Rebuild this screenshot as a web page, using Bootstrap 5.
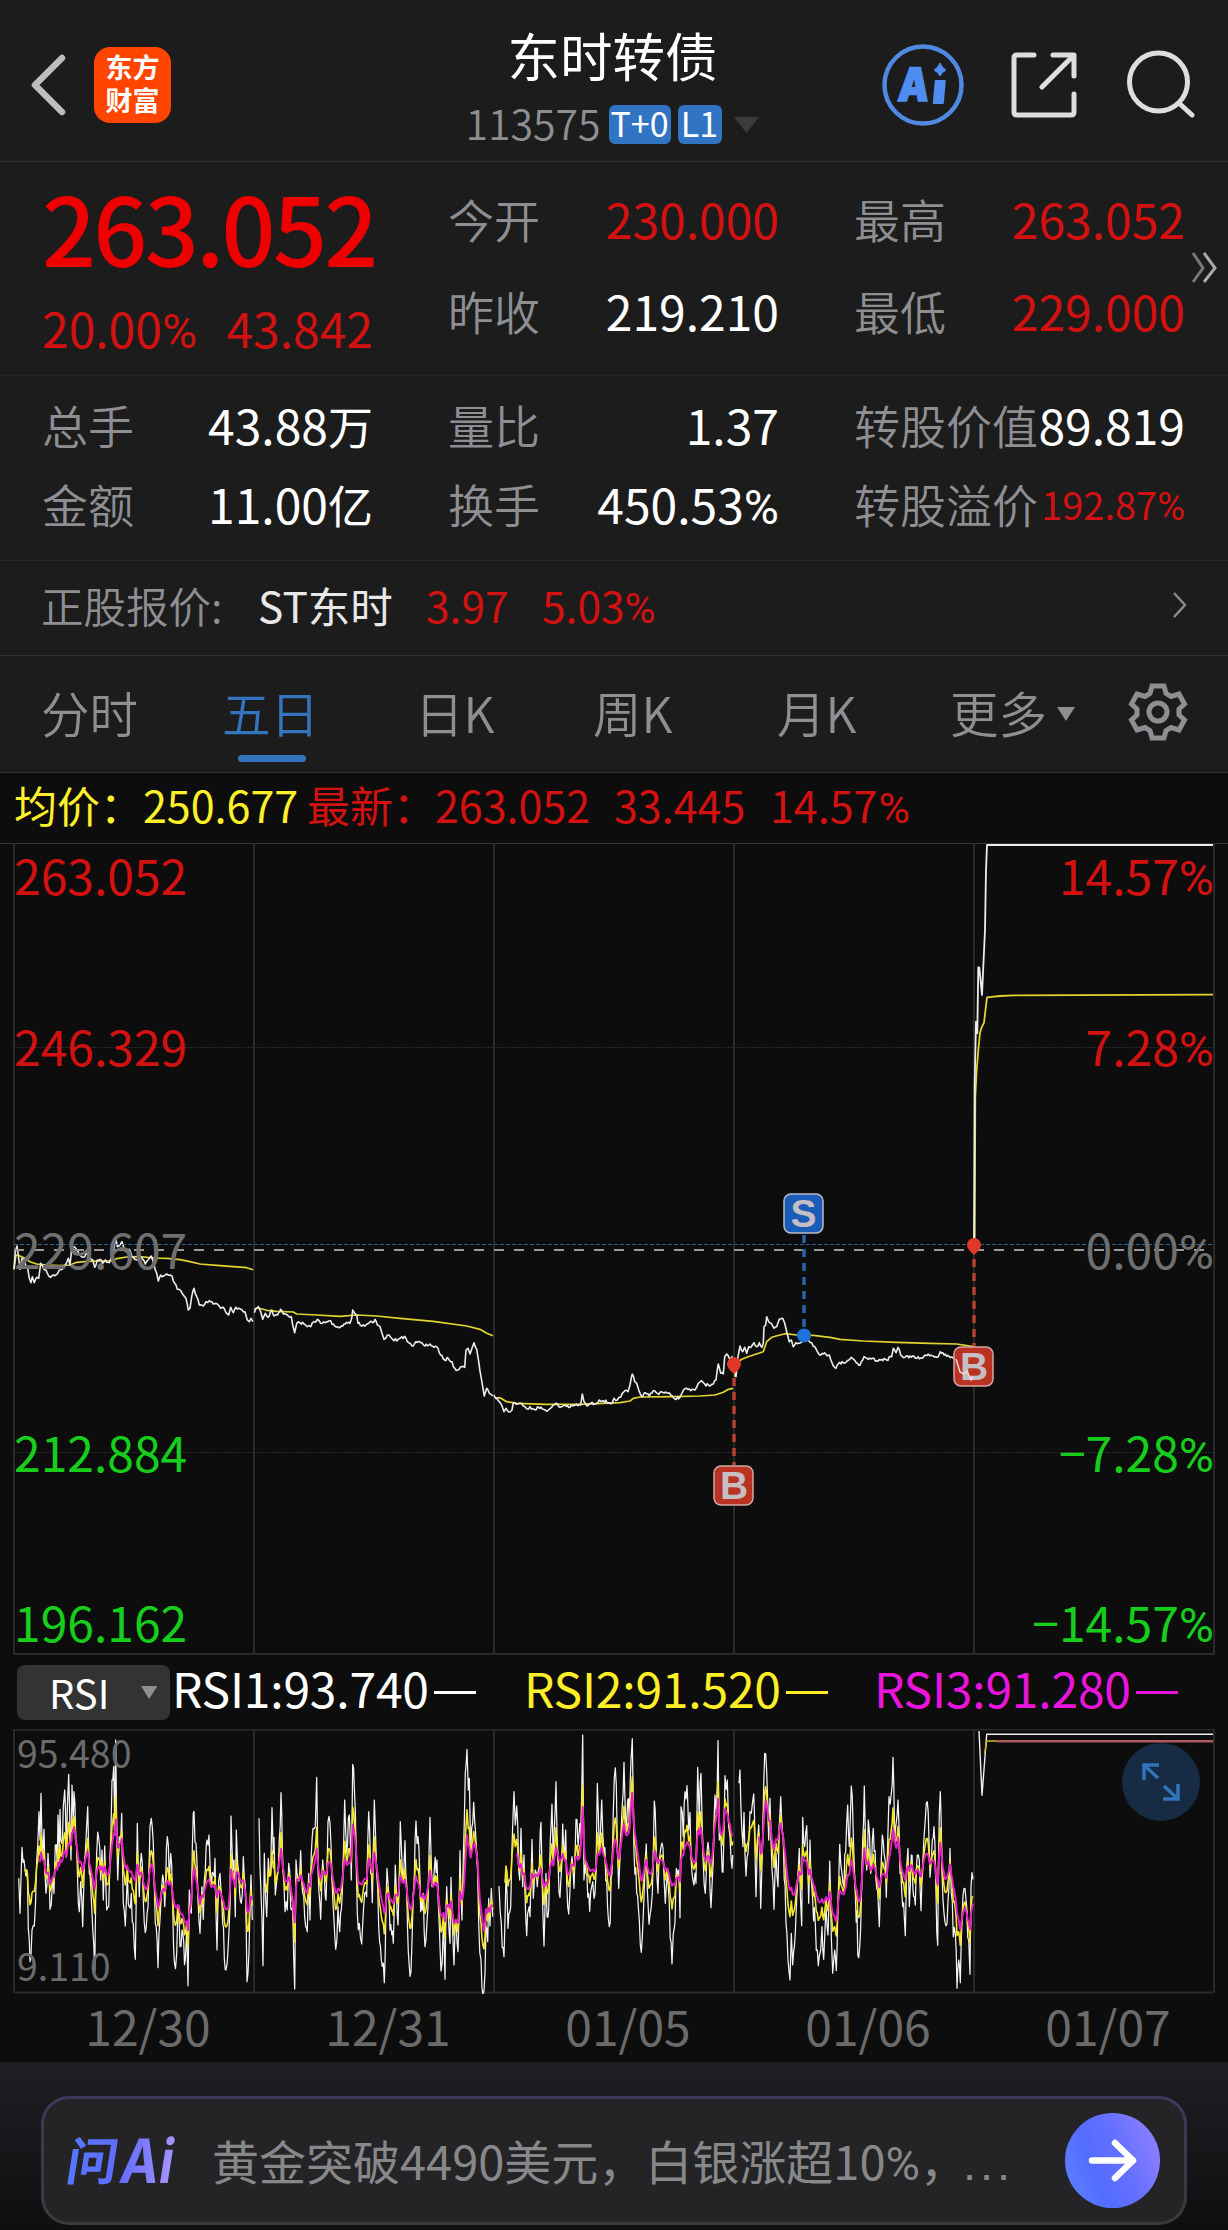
<!DOCTYPE html>
<html lang="zh-CN">
<head>
<meta charset="utf-8">
<meta name="viewport" content="width=device-width, initial-scale=1">
<title>东时转债 113575</title>
<link href="https://cdn.jsdelivr.net/npm/bootstrap@5.3.0/dist/css/bootstrap.min.css" rel="stylesheet">
<style>
:root{--up:#d31110;--muted:#8e8e93;--line:#303032}
body{background:#1c1c1c;color:#fff;font-family:"Noto Sans CJK SC",sans-serif;font-weight:400;width:1228px;height:2230px;overflow:hidden;line-height:1.2}
svg{display:block}
.pc{font-family:Roboto,sans-serif;line-height:0}
.up{color:var(--up)}
.dim{color:var(--muted);font-weight:350}
.topbar{height:162px;border-bottom:1px solid var(--line);display:grid;grid-template-columns:1fr auto 1fr;padding:0 33px 0 30px}
.brand{width:77px;height:76px;border-radius:16px;background:#ff4500;font-size:27px;line-height:33px;font-weight:700;margin-left:27px;padding-top:3px}
.bond-name{font-size:52.5px;line-height:60px;margin-top:24px}
.code-row{margin-top:21px;height:39px}
.bond-code{font-size:41px;line-height:48px;padding-bottom:6px}
.flag{background:#3174c3;border-radius:6px;height:39px;font-size:34px;line-height:35px;text-align:center}
.quote{height:214px;padding:0 42px;border-bottom:1px solid #242425}
.quote,.stats{gap:75px}
.slot{width:331px;flex:none}
.last-price{font-size:95px;line-height:96px;color:#ee0000;font-weight:500;margin-top:16px;letter-spacing:-2.8px}
.pair{font-size:48px;height:92px;display:flex;justify-content:space-between;align-items:center;white-space:nowrap}
.pair .dim{font-size:46px}
.stats{height:185px;padding:9px 42px 0;border-bottom:1px solid #272728}
.stats .pair{height:79px}
.stock{height:95px;padding:0 40px 8px 41px;font-size:42.5px;border-bottom:1px solid var(--line);white-space:nowrap}
.tabs{height:117px;display:grid;grid-template-columns:181px 193px 178px 184px 173px 178px 1fr;padding-left:41px;border-bottom:1px solid var(--line);font-size:48.5px;font-weight:350;color:var(--muted);align-items:center;line-height:60px}
.tabs>div{padding-bottom:4px}
.tabs .on{color:#3575c0;position:relative}
.tabs .on::after{content:"";position:absolute;left:16px;top:73px;width:68px;height:7px;border-radius:4px;background:#3575c0}
.panel{background:#0d0d0d;height:1289px}
.legend-row{height:70px;font-size:43px;line-height:62px;padding-left:14px;white-space:pre}
.legend-row .pc{margin-left:1px}
.rsi-row{height:74px;padding-left:17px;font-size:48px;letter-spacing:-.2px;white-space:nowrap}
.picker{width:153px;height:55px;border-radius:8px;background:#333;font-size:40px;line-height:49px;letter-spacing:0}
.rsi-item{width:350px;color:var(--c)}
.rsi-item span{position:relative;top:-4px}
.rsi-item i{width:42px;height:3px;background:var(--c);margin-left:5px}
.dates{height:68px;padding-left:28px;font-size:48px;line-height:62px;color:#6b6b6b}
.dates div{width:240px;text-align:center}
.ask{height:168px;background:linear-gradient(#1f1e24,#0f0f10);padding:34px 41px 0}
.ask-box{height:129px;border-radius:28px;border:3px solid transparent;background:linear-gradient(#242426,#242426) padding-box,linear-gradient(#3b3a5c,#3a3a3c) border-box;padding:0 24px 0 21px}
.ask-text{font-size:47px;color:#88888a;width:816px;white-space:nowrap;margin-left:33px;line-height:60px;padding-bottom:2px}
.dots{margin-left:-4px;font-family:"Liberation Sans",sans-serif;letter-spacing:4px;line-height:0}
</style>
</head>
<body>
<header class="topbar">
  <div class="d-flex align-items-center pt-2">
    <svg width="37" height="64" viewBox="0 0 37 64" fill="none" stroke="#bdbdbd" stroke-width="6.500" stroke-linecap="round" stroke-linejoin="round"><path d="M32 5L5 32L32 59"/></svg>
    <div class="brand text-center">东方<br>财富</div>
  </div>
  <div class="text-center">
    <div class="bond-name">东时转债</div>
    <div class="code-row d-flex align-items-center justify-content-center">
      <span class="bond-code dim">113575</span>
      <span class="flag" style="width:62px;margin-left:8px">T+0</span>
      <span class="flag" style="width:44px;margin-left:7px">L1</span>
      <svg style="margin-left:8px" width="30" height="20"><path d="M4 2h25L16.500 18z" fill="#3b3b3b"/></svg>
    </div>
  </div>
  <div class="d-flex align-items-center justify-content-end pt-2">
    <svg width="314" height="84" viewBox="881 44 314 84" fill="none">
      <circle cx="923" cy="86" r="38.500" stroke="#5088e2" stroke-width="4.500"/>
      <g fill="#4f8df0" font-family="Inter" font-weight="900" font-size="46" transform="translate(895 102) skewX(-5)"><text x="2" y="0" textLength="31" lengthAdjust="spacingAndGlyphs" stroke="#4f8df0" stroke-width="1.500">A</text><path d="M39-20h9v22h-9z" stroke="#4f8df0" stroke-width="2" stroke-linejoin="round"/></g>
      <path d="M940 64q2 5 6 7q-4 2-6 6q-2-4-6-6q4-2 6-7z" fill="#4f8df0" stroke="#4f8df0"/>
      <g stroke="#dedede" stroke-width="5" stroke-linecap="round" stroke-linejoin="round"><path d="M1034 56H1017Q1014 56 1014 59V113Q1014 116 1017 116H1071Q1074 116 1074 113V95M1053 56H1074V77M1073 57L1042 88"/><ellipse cx="1158.500" cy="83" rx="29" ry="29"/><path d="M1180 105L1192 116"/></g>
    </svg>
  </div>
</header>

<section class="quote d-flex position-relative">
  <div class="slot">
    <div class="last-price">263.052</div>
    <div class="pair up mt-2"><span>20.00<span class="pc">%</span></span><span>43.842</span></div>
  </div>
  <div class="slot" style="padding-top:11px">
    <div class="pair"><span class="dim">今开</span><span class="up">230.000</span></div>
    <div class="pair"><span class="dim">昨收</span><span>219.210</span></div>
  </div>
  <div class="slot" style="padding-top:11px">
    <div class="pair"><span class="dim">最高</span><span class="up">263.052</span></div>
    <div class="pair"><span class="dim">最低</span><span class="up">229.000</span></div>
  </div>
  <svg class="position-absolute" style="left:1189px;top:88px" width="32" height="36" fill="none" stroke-width="3"><path d="M4 3L14 18L4 32" stroke="#777"/><path d="M15 3L26 18L15 32" stroke="#aaa"/></svg>
</section>

<section class="stats d-flex">
  <div class="slot">
    <div class="pair"><span class="dim">总手</span><span>43.88<span style="font-size:45px;line-height:0">万</span></span></div>
    <div class="pair"><span class="dim">金额</span><span>11.00<span style="font-size:45px;line-height:0">亿</span></span></div>
  </div>
  <div class="slot">
    <div class="pair"><span class="dim">量比</span><span>1.37</span></div>
    <div class="pair"><span class="dim">换手</span><span>450.53<span class="pc">%</span></span></div>
  </div>
  <div class="slot">
    <div class="pair"><span class="dim">转股价值</span><span>89.819</span></div>
    <div class="pair"><span class="dim">转股溢价</span><span class="up" style="font-size:38px">192.87<span class="pc">%</span></span></div>
  </div>
</section>

<section class="stock d-flex align-items-center">
  <span class="dim" style="width:217px">正股报价:</span><span style="width:168px;color:#e8e8e8">ST东时</span><span class="up" style="width:116px">3.97</span><span class="up">5.03<span class="pc">%</span></span>
  <svg class="ms-auto" width="16" height="30" fill="none" stroke="#8a8a8a" stroke-width="2.500"><path d="M2 4L13 16L2 28"/></svg>
</section>

<nav class="tabs">
  <div>分时</div><div class="on">五日</div><div>日K</div><div>周K</div><div>月K</div>
  <div class="d-flex align-items-center">更多<svg class="ms-2" width="20" height="18"><path d="M2 4h18L11 18z" fill="#8e8e93"/></svg></div>
  <div><svg width="60" height="60" viewBox="-30 -30 60 60" fill="none" stroke="#8e8e93" stroke-width="5"><path d="M-6-26H6L8-18.500L13-15.500L21-18L26.500-8L21-3V3L26.500 8L21 18L13 15.500L8 18.500L6 26H-6L-8 18.500L-13 15.500L-21 18L-26.500 8L-21 3V-3L-26.500-8L-21-18L-13-15.500L-8-18.500Z"/><circle r="9"/></svg></div>
</nav>

<main class="panel">
  <div class="legend-row d-flex"><span style="width:129px;color:#fff02a">均价：</span><span style="width:164px;color:#fff02a">250.677</span><span class="up" style="width:128px">最新：</span><span class="up" style="width:179px">263.052</span><span class="up" style="width:156px">33.445</span><span class="up">14.57<span class="pc">%</span></span></div>

  <svg width="1228" height="812" viewBox="0 843 1228 812" fill="none">
    <g stroke="#29292a" stroke-width="2"><path d="M0 843.500H1228" stroke="#333" stroke-width="1"/><path d="M14 843V1655M254 843V1655M494 843V1655M734 843V1655M974 843V1655M1214 843V1655M14 1654H1214"/></g>
    <path d="M14 1047.500H1214M14 1452.500H1214" stroke="#333" stroke-dasharray="1.500 1.500"/>
    <g id="price" stroke-linejoin="round"></g>
    <path d="M14 1244.500H1214" stroke="#35618f" stroke-dasharray="4 2"/>
    <path d="M14 1250H1214" stroke="#999" stroke-width="2" stroke-dasharray="10 10"/>
    <g font-size="48" font-family="Noto Sans CJK SC">
      <g fill="#d31110"><text x="14" y="895">263.052</text><text x="14" y="1066">246.329</text><text x="1214" y="895" text-anchor="end">14.57<tspan class="pc">%</tspan></text><text x="1214" y="1066" text-anchor="end">7.28<tspan class="pc">%</tspan></text></g>
      <g fill="#6f6f6f"><text x="14" y="1269">229.607</text><text x="1214" y="1269" text-anchor="end">0.00<tspan class="pc">%</tspan></text></g>
      <g fill="#17ce1c"><text x="14" y="1472">212.884</text><text x="14" y="1642">196.162</text><text x="1214" y="1472" text-anchor="end">−7.28<tspan class="pc">%</tspan></text><text x="1214" y="1642" text-anchor="end">−14.57<tspan class="pc">%</tspan></text></g>
    </g>
    <g stroke-width="3.500" stroke-dasharray="8 6"><path d="M804 1235V1336" stroke="#2962ad"/><path d="M734 1378V1465M974 1259V1346" stroke="#b4402f"/></g>
    <circle cx="804" cy="1335.500" r="7" fill="#1e72dc"/>
    <path d="M727 1364a7 7 0 0 1 14 0q0 4-7 10q-7-6-7-10zM967 1245a7 7 0 0 1 14 0q0 4-7 10q-7-6-7-10z" fill="#e0392a"/>
    <g stroke="#b9bcc8" stroke-width="1.500"><rect x="784" y="1194" width="39" height="39" rx="7" fill="#1a5cb8"/><g fill="#b93222" stroke="#d2a8a4"><rect x="714" y="1466" width="39" height="39" rx="7"/><rect x="954" y="1347" width="39" height="39" rx="7"/></g></g>
    <g font-family="Liberation Sans" font-weight="700" font-size="39" text-anchor="middle" fill="#c5bec2"><text x="803.500" y="1227">S</text><text x="734" y="1499">B</text><text x="974" y="1380">B</text></g>
    <path d="M956 1359L960 1372L964 1374L967 1371L971 1380L973 1377" stroke="#f4d8d5" stroke-width="1.500"/>
  </svg>

  <div class="rsi-row d-flex align-items-center">
    <div class="picker d-flex align-items-center"><span style="margin-left:32px;width:91px">RSI</span><svg width="18" height="14"><path d="M1 1h16.500L9 14z" fill="#8e8e93"/></svg></div>
    <div class="rsi-item d-flex align-items-center" style="--c:#fff;width:354px;padding-left:2px"><span>RSI1:93.740</span><i></i></div>
    <div class="rsi-item d-flex align-items-center" style="--c:#fdee27"><span>RSI2:91.520</span><i></i></div>
    <div class="rsi-item d-flex align-items-center" style="--c:#e915dc"><span>RSI3:91.280</span><i></i></div>
  </div>

  <svg width="1228" height="265" viewBox="0 1729 1228 265" fill="none">
    <path d="M14 1729V1993M254 1729V1993M494 1729V1993M734 1729V1993M974 1729V1993M1214 1729V1993M13 1729.500H1215M13 1992.500H1215" stroke="#29292a" stroke-width="2"/>
    <g id="rsi" stroke-linejoin="round"></g>
    <g fill="#6b6b6b" font-family="Noto Sans CJK SC" font-size="37.500"><text x="17" y="1768">95.480</text><text x="17" y="1981">9.110</text></g>
    <circle cx="1161" cy="1782" r="39" fill="#172b44"/>
    <path d="M1159 1765H1144V1780M1145 1766L1158 1778M1178 1784V1799H1163M1177 1798L1164 1786" stroke="#3273bd" stroke-width="3.500"/>
  </svg>

  <div class="dates d-flex"><div>12/30</div><div>12/31</div><div>01/05</div><div>01/06</div><div>01/07</div></div>
</main>

<footer class="ask">
  <div class="ask-box d-flex align-items-center">
    <svg width="114" height="56" viewBox="66 2133 114 56">
      <defs><linearGradient id="mark-fill" gradientUnits="userSpaceOnUse" x1="0" x2="104" y1="0" y2="0"><stop stop-color="#5577ff"/><stop offset=".5" stop-color="#626bff"/><stop offset="1" stop-color="#a596fb"/></linearGradient></defs>
      <g transform="translate(68 2182) skewX(-9)" fill="url(#mark-fill)" font-weight="700"><text x="-3" y="-2" font-size="51" font-family="Noto Sans CJK SC">问</text><text x="51" y="1" font-family="Inter" font-size="61" textLength="53" lengthAdjust="spacingAndGlyphs">Ai</text></g>
    </svg>
    <div class="ask-text">黄金突破4490美元，白银涨超10<span class="pc">%</span>，<span class="dots">...</span></div>
    <svg class="ms-auto" width="95" height="95" viewBox="0 0 95 95"><defs><linearGradient id="go" x1="0" y1=".7" x2="1" y2=".3"><stop stop-color="#5a80ff"/><stop offset=".3" stop-color="#536cff"/><stop offset=".6" stop-color="#6470ff"/><stop offset="1" stop-color="#8d80ff"/></linearGradient></defs><circle cx="47.500" cy="47.500" r="47.500" fill="url(#go)"/><path d="M27 47.500H68M50 30L68 47.500L50 65" fill="none" stroke="#fff" stroke-width="6.500" stroke-linecap="round" stroke-linejoin="round"/></svg>
  </div>
</footer>

<script src="https://cdn.jsdelivr.net/npm/bootstrap@5.3.0/dist/js/bootstrap.bundle.min.js"></script>
<script>
// Samples are stored in thirds of a pixel, relative to the origin of each series.
let seed = 7;
const rnd = () => (seed = (seed * 16807) % 2147483647) / 2147483647 - 0.5;
const parse = s => s.trim().split(/\s+/).map(p => p.split(',').map(Number));
function fill(pts, step, amp) {
  const out = [];
  for (let i = 0; i < pts.length - 1; i++) {
    const [x0, y0] = pts[i], [x1, y1] = pts[i + 1];
    out.push([x0, y0]);
    const n = Math.floor((x1 - x0) / step);
    for (let k = 1; k < n; k++) out.push([x0 + (x1 - x0) * k / n, y0 + (y1 - y0) * k / n + rnd() * amp]);
  }
  out.push(pts[pts.length - 1]);
  return out;
}
function at(pts, x) {
  if (x <= pts[0][0]) return pts[0][1];
  for (let i = 1; i < pts.length; i++) if (x <= pts[i][0]) {
    const [a, b] = pts[i - 1], [c, d] = pts[i];
    return b + (d - b) * (x - a) / (c - a);
  }
  return pts[pts.length - 1][1];
}
function draw(id, ox, oy, pts, color, w) {
  const el = document.createElementNS('http://www.w3.org/2000/svg', 'polyline');
  el.setAttribute('points', pts.map(p => (ox + p[0] / 3).toFixed(1) + ',' + (oy + p[1] / 3).toFixed(1)).join(' '));
  el.setAttribute('stroke', color);
  el.setAttribute('stroke-width', w);
  document.getElementById(id).appendChild(el);
}
const days = [
 [0,1180,"42,268 48,225 60,228 75,235 90,245 110,252 140,255 180,257 210,255 230,247 260,244 300,243 335,243 350,236 380,231 420,230 460,234 500,235 540,239 570,245 600,252 650,256 700,260 740,263 759,269",
 "42,268 46,215 51,198 56,235 60,268 66,235 75,250 83,265 88,295 93,308 97,290 103,308 110,292 116,295 122,250 130,265 138,270 146,288 152,292 160,285 168,285 178,270 186,268 196,255 205,235 210,255 215,205 222,200 230,210 240,225 250,232 262,222 270,235 278,240 284,262 292,240 300,238 308,250 316,240 328,248 338,220 342,205 347,172 352,200 360,195 366,185 372,205 380,215 388,208 396,230 404,238 410,240 420,228 428,238 436,252 444,240 454,228 460,245 466,270 470,280 475,303 482,285 490,288 500,282 510,285 516,288 524,310 532,328 542,332 550,345 558,355 565,390 570,385 575,350 582,325 590,350 598,375 610,378 618,365 628,362 640,372 652,372 662,385 670,382 678,398 686,405 692,382 700,398 708,382 716,385 726,390 735,395 742,420 748,425 753,415 759,425"],
 [0,1180,"763,387 775,384 800,391 830,394 880,396 890,402 950,405 1020,409 1070,405 1130,408 1200,415 1300,424 1400,438 1440,448 1460,460 1479,467",
 "763,398 768,385 775,380 782,395 788,418 796,400 804,412 815,390 822,408 832,405 842,388 850,402 862,405 874,410 878,435 884,458 890,430 900,428 912,432 922,440 932,440 942,425 952,418 962,430 975,428 988,422 1000,432 1012,440 1024,438 1036,432 1050,430 1055,415 1058,390 1064,400 1070,405 1074,430 1085,438 1098,435 1110,425 1118,428 1125,418 1132,435 1140,440 1146,460 1152,478 1162,465 1172,472 1182,482 1195,478 1205,470 1218,475 1226,488 1236,498 1248,485 1262,488 1275,498 1290,492 1302,502 1314,505 1322,525 1334,540 1345,535 1356,545 1364,565 1374,570 1382,560 1394,562 1398,510 1404,505 1410,522 1416,505 1422,488 1430,508 1436,545 1444,595 1448,620 1453,648 1460,625 1468,640 1478,648"],
 [480,1180,"45,655 60,653 80,665 110,670 200,673 300,673 420,668 450,663 460,655 480,651 580,650 660,648 705,645 730,637 745,628 759,625",
 "42,645 50,655 58,665 66,678 72,695 78,685 86,696 96,690 100,668 112,672 122,670 130,678 140,686 150,680 162,688 176,682 190,688 205,690 215,682 228,670 240,682 255,675 270,682 285,675 302,675 307,642 312,665 320,678 332,670 345,672 358,660 370,662 385,668 396,670 402,655 412,660 422,652 432,635 444,635 450,615 457,582 464,605 470,610 476,630 485,650 492,640 500,642 508,648 520,632 532,640 545,635 560,638 572,645 582,655 600,652 608,635 620,625 632,632 645,630 655,610 664,602 674,612 690,618 700,612 708,600 715,552 722,580 730,582 734,530 740,522 748,535 756,530 760,560"],
 [480,1180,"764,590 775,545 785,538 800,532 820,525 850,515 860,485 875,472 900,465 915,461 950,465 1000,466 1050,472 1080,478 1150,483 1250,487 1350,490 1430,492 1480,500",
 "764,560 768,590 774,530 780,498 788,515 794,502 800,520 806,500 814,500 822,488 830,500 838,488 846,502 850,490 852,440 857,435 860,410 866,425 874,430 882,445 890,440 898,418 908,415 914,430 920,455 928,485 934,480 940,500 948,488 955,490 966,485 975,475 985,480 995,488 1004,500 1015,520 1030,522 1048,525 1056,548 1068,565 1076,550 1090,548 1102,542 1114,532 1125,542 1140,556 1152,530 1165,538 1178,535 1190,542 1205,538 1220,540 1235,530 1240,505 1248,518 1254,502 1262,525 1275,532 1290,528 1310,535 1330,532 1345,522 1360,528 1375,530 1381,515 1392,525 1408,530 1420,535 1428,545 1436,575 1448,580 1456,575 1465,598 1476,595"]
];
for (const [ox, oy, avg, px] of days) {
  draw('price', ox, oy, parse(avg), '#e2d42f', 1.7);
  draw('price', ox, oy, fill(parse(px), 3.5, 9), '#ececec', 1.6);
}
draw('price', 900, 830, parse("224,1240 226,800 230,720 235,660 240,608 245,592 252,578 256,545 261,502 300,498 340,496 939,494"), '#e2d42f', 1.8);
draw('price', 900, 830, parse("222,1245 224,760 228,575 232,610 235,412 238,413 246,495 250,410 255,300 258,120 261,45 939,45"), '#ececec', 1.8);

const osc = [
 [0,1640,"56,715 60,820 66,622 72,660 80,690 90,965 96,870 103,858 110,660 117,515 120,600 123,460 128,650 132,568 138,760 144,640 150,808 157,740 162,760 166,615 172,680 174,525 178,640 180,508 185,610 190,500 194,450 199,650 206,403 210,560 213,660 216,435 220,540 222,455 230,620 238,815 242,725 248,860 256,640 263,500 268,700 276,820 284,995 290,640 296,595 302,720 306,630 310,780 314,618 320,810 326,800 330,660 336,420 341,380 344,560 347,300 350,560 353,720 358,590 362,600 365,520 370,790 376,858 382,700 388,800 394,760 400,850 406,958 412,550 418,770 424,640 430,780 436,878 444,800 450,560 454,535 460,610 466,850 474,983 482,800 488,705 494,800 502,590 508,720 512,640 518,800 523,965 530,940 536,800 540,920 546,870 556,960 560,870 564,1037 568,750 574,820 580,520 582,514 588,610 594,780 600,880 606,740 610,838 616,690 621,600 627,585 634,740 640,700 645,655 651,930 656,720 660,700 668,850 678,990 685,915 690,800 693,528 697,650 702,660 706,830 709,570 716,700 724,790 730,650 736,740 741,1025 747,935 753,705 757,840",
 "115,690 125,655 150,720 180,680 205,640 222,575 235,640 250,675 262,650 285,715 300,685 328,690 347,570 355,620 366,605 378,670 400,690 415,690 440,735 456,685 475,785 490,750 510,735 530,785 565,850 582,705 600,780 625,735 650,750 685,790 693,710 705,735 712,700 728,720 745,800 756,770"],
 [0,1640,"777,535 783,760 789,977 793,640 800,830 805,655 812,700 816,503 820,640 822,592 826,765 833,700 838,600 843,458 848,680 855,815 862,810 866,670 872,805 878,800 884,1047 888,660 894,720 902,632 908,760 917,860 922,875 926,700 930,840 934,640 939,565 946,560 950,412 954,680 962,838 968,660 978,780 984,545 990,550 996,720 1002,840 1007,928 1014,800 1019,875 1027,760 1034,480 1040,640 1048,525 1054,720 1058,373 1066,510 1072,820 1078,850 1085,912 1094,760 1100,770 1106,515 1112,700 1117,788 1123,480 1130,700 1136,860 1144,960 1153,1028 1161,685 1170,870 1180,910 1186,675 1194,855 1201,545 1208,720 1215,602 1225,935 1233,993 1240,760 1248,543 1254,590 1262,815 1270,760 1275,920 1284,800 1290,532 1296,740 1303,690 1311,660 1318,860 1323,993 1330,860 1335,1018 1340,740 1350,910 1353,712 1362,975 1368,840 1374,935 1380,632 1386,840 1390,655 1396,400 1401,328 1405,450 1408,415 1412,640 1421,487 1430,640 1436,850 1443,960 1446,1045 1452,1052 1458,860 1463,905 1466,775 1470,858 1474,745 1478,830",
 "830,710 843,650 855,710 870,720 884,820 890,720 905,715 922,745 940,700 950,655 960,700 975,695 992,680 1008,740 1022,735 1035,675 1050,690 1058,580 1068,625 1075,710 1100,710 1108,665 1116,690 1124,655 1140,730 1155,800 1165,760 1185,780 1203,725 1215,735 1235,790 1248,730 1265,770 1275,760 1290,715 1300,740 1312,740 1320,800 1335,820 1345,790 1352,790 1365,845 1375,835 1380,770 1392,770 1401,620 1410,660 1424,620 1432,650 1440,760 1452,850 1458,800 1470,810 1478,795"],
 [400,1640,"297,738 304,850 312,950 318,707 324,865 332,800 336,620 342,455 346,555 350,498 356,690 359,720 363,565 368,740 372,645 380,887 388,800 390,830 396,598 400,775 406,690 412,740 418,680 423,547 428,800 432,918 438,700 441,830 446,810 451,600 456,492 460,660 468,425 474,660 480,772 485,680 488,552 494,640 497,570 503,800 506,822 512,690 516,650 522,745 528,538 534,620 542,580 548,285 552,720 558,700 569,814 575,740 582,775 588,700 592,430 598,640 605,480 612,640 620,720 628,860 636,700 643,415 649,435 656,745 664,560 672,367 678,560 683,480 688,560 693,360 697,296 702,640 710,760 718,840 724,937 732,770 739,612 744,790 750,825 757,760 763,483 768,600 774,760 779,650 783,620 789,625 796,790 802,700 808,790 816,972 820,880 825,845 829,685 835,690 840,833 843,500 850,590 855,455 861,437 866,570 870,517 876,700 882,735 888,730 893,382 898,540 903,400 909,650 916,760 924,607 933,803 940,660 945,465 949,520 954,302 958,600 964,620 969,697 975,407 982,420 986,560 990,590 996,685 998,645",
 "350,660 365,690 385,740 400,705 425,705 438,730 450,690 460,680 470,640 490,655 505,690 525,665 540,665 548,530 555,655 575,685 590,680 600,635 612,650 630,690 645,625 658,650 670,575 685,600 697,480 705,570 725,700 738,665 755,690 765,650 800,680 825,720 840,710 845,665 865,620 880,660 888,655 893,600 902,580 915,650 935,655 943,580 954,500 962,590 975,520 990,550 998,580"],
 [400,1640,"1017,430 1020,390 1025,560 1029,620 1032,517 1038,708 1044,640 1050,515 1054,520 1061,462 1066,680 1068,770 1076,555 1082,805 1088,600 1094,340 1100,395 1106,600 1110,475 1116,690 1122,808 1128,640 1134,740 1138,560 1142,470 1150,600 1158,850 1164,960 1170,1020 1174,880 1178,975 1186,880 1192,740 1198,625 1205,857 1208,532 1214,620 1220,557 1226,790 1230,600 1238,780 1246,850 1252,930 1258,948 1262,930 1266,860 1271,958 1278,800 1284,885 1289,663 1294,890 1298,1000 1304,930 1309,992 1314,780 1319,613 1326,700 1332,740 1337,635 1343,495 1348,620 1354,438 1360,590 1366,760 1376,953 1382,860 1388,600 1393,438 1400,690 1405,540 1412,700 1420,565 1428,720 1438,860 1447,585 1452,640 1459,772 1467,470 1474,460 1479,352 1484,600 1494,480 1500,700 1508,800 1516,887 1520,680 1524,625 1528,800 1534,645 1546,795 1552,645 1558,660 1563,812 1573,580 1582,485 1590,712 1597,600 1602,560 1608,760 1613,916 1618,520 1621,455 1626,700 1632,820 1641,852 1650,625 1654,760 1660,890 1666,880 1671,1045 1676,960 1681,1028 1686,840 1695,745 1700,800 1706,900 1710,1003 1713,740 1719,718",
 "1075,590 1085,630 1097,500 1108,540 1120,610 1142,560 1152,600 1165,700 1182,745 1200,700 1210,660 1225,690 1240,720 1258,765 1290,768 1308,830 1318,770 1335,765 1354,690 1370,740 1380,770 1393,650 1408,690 1425,690 1438,725 1460,705 1470,665 1480,590 1490,640 1495,600 1502,670 1515,700 1530,675 1560,705 1575,660 1600,670 1613,710 1621,630 1635,700 1650,680 1662,730 1680,850 1695,810 1710,850 1719,800"]
];
for (const [ox, oy, fast, slow] of osc) {
  const f = fill(parse(fast), 2.4, 90), s = parse(slow), x0 = f[0][0];
  draw('rsi', ox, oy, f, '#f4f4f4', 1.25);
  draw('rsi', ox, oy, f.filter(p => p[0] > x0 + 16).map(p => [p[0], at(s, p[0]) + 0.38 * (p[1] - at(s, p[0]))]), '#f5e62a', 1.6);
  draw('rsi', ox, oy, f.filter(p => p[0] >= s[0][0]).map(p => [p[0], at(s, p[0]) + 0.12 * (p[1] - at(s, p[0]))]), '#e31fcb', 1.9);
}
draw('rsi', 800, 1640, parse("537,273 546,466 560,283 1239,283"), '#f0f0f0', 1.4);
draw('rsi', 800, 1640, parse("554,340 560,303 1239,303"), '#c9b92a', 1.5);
draw('rsi', 800, 1640, parse("590,304 1239,304"), '#b0585e', 2.4);
</script>
</body>
</html>
